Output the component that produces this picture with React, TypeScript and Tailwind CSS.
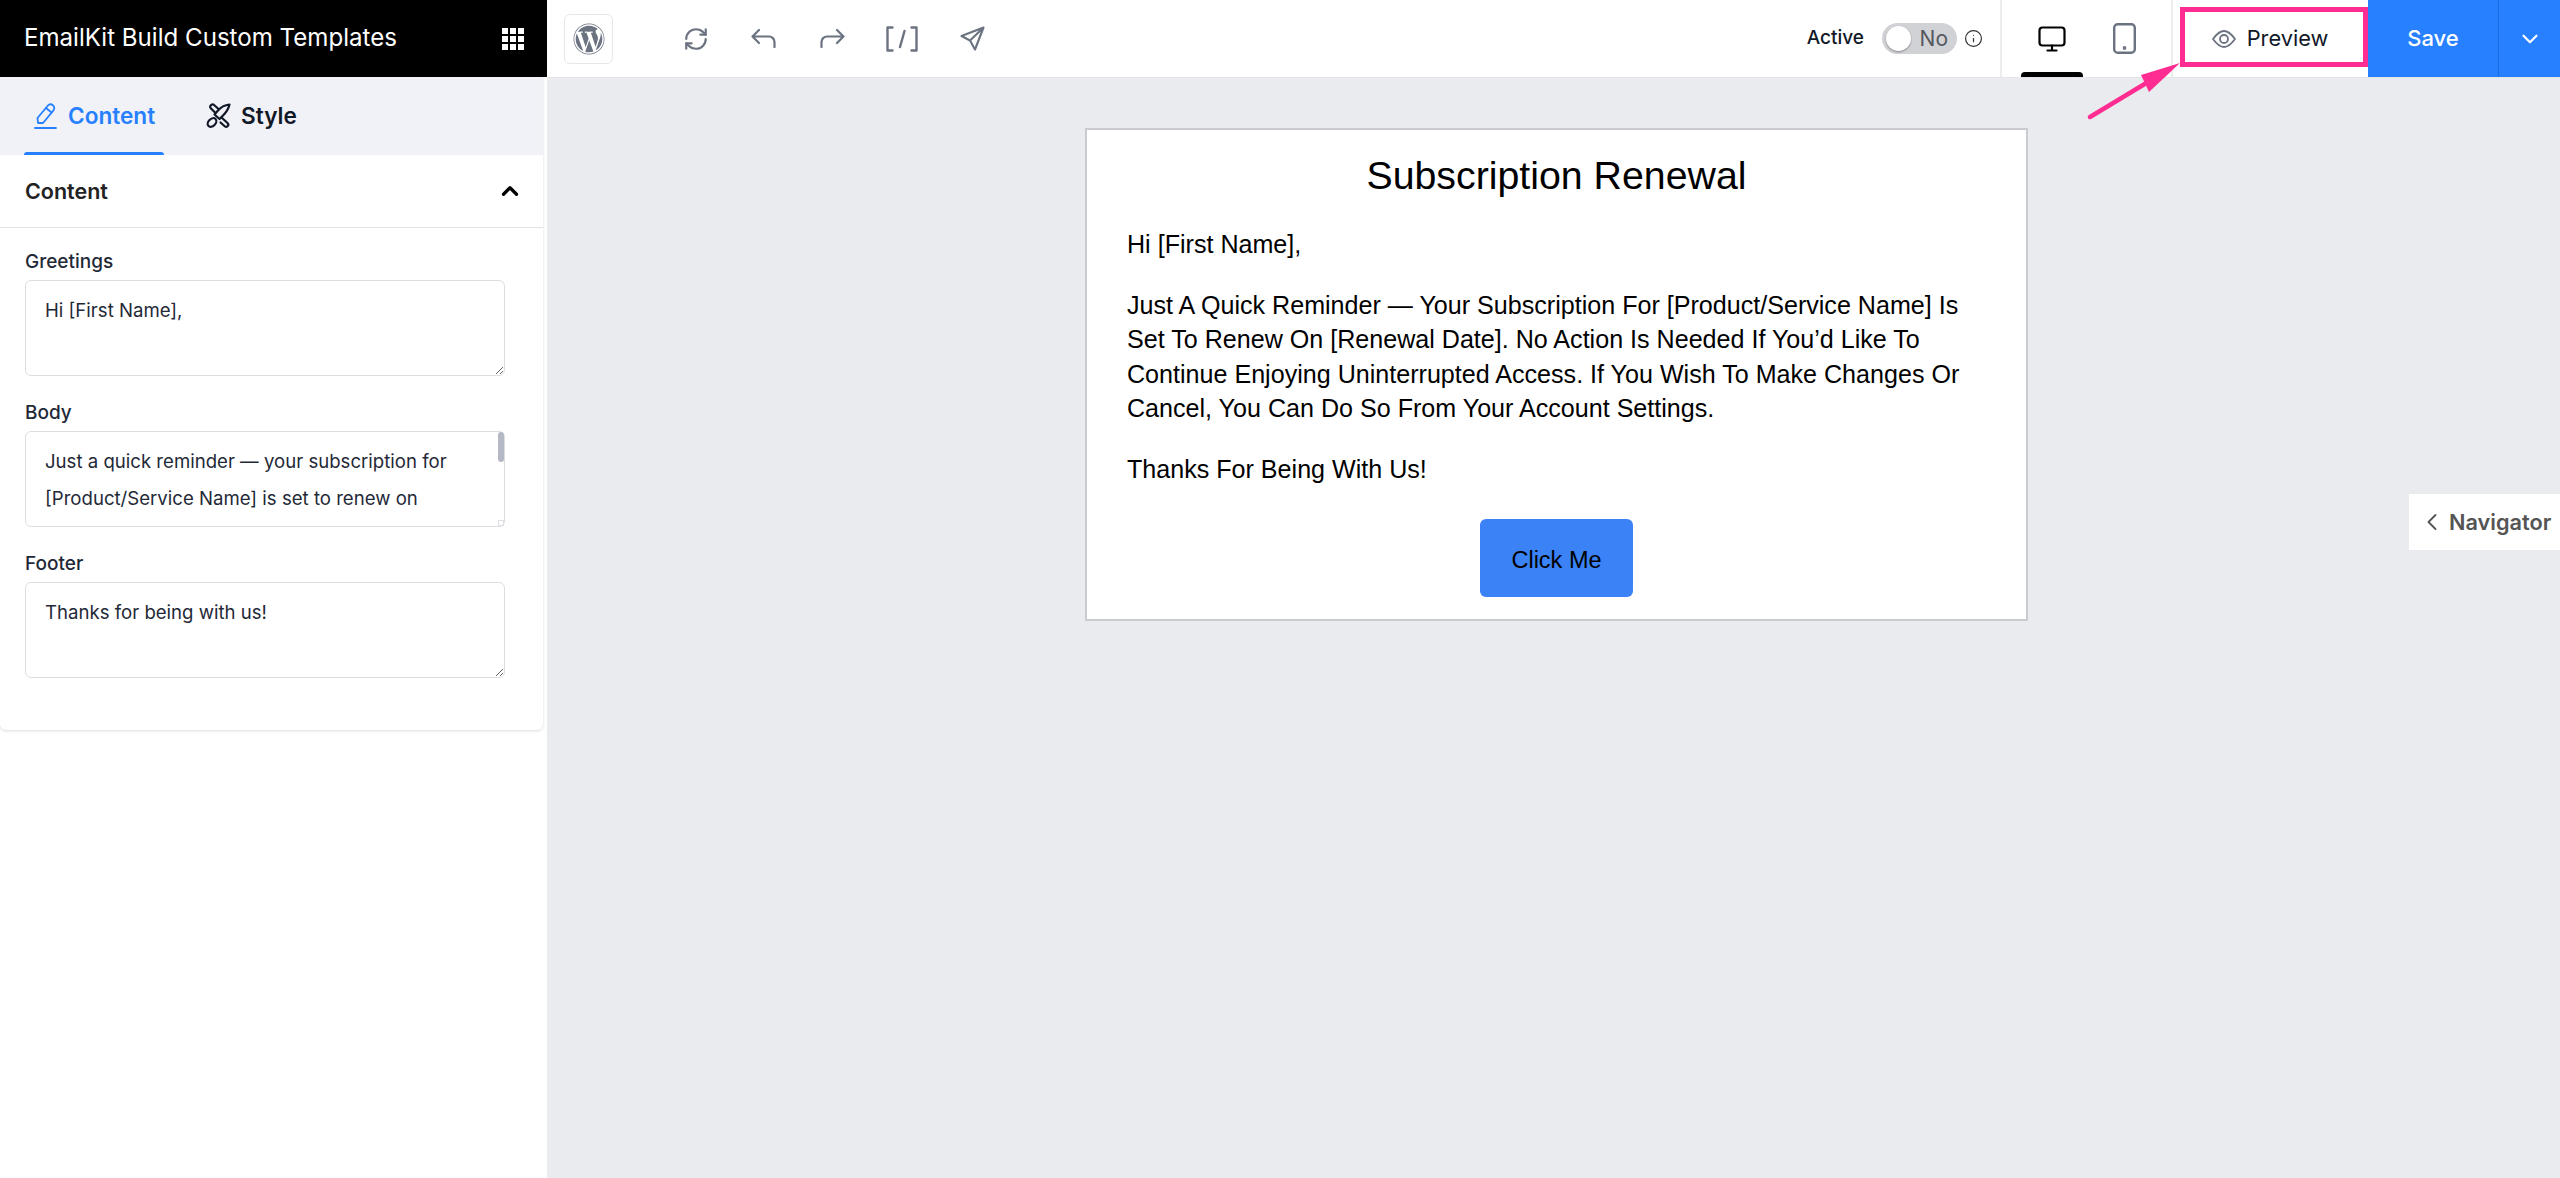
import { ChevronDown, ChevronLeft, ChevronUp, Info, RefreshCw } from 'lucide-react';
import { FaWordpress } from 'react-icons/fa';

// only the part of the body text that shows in the box
const BODY_TEXT = 'Just a quick reminder — your subscription for [Product/Service Name] is set to renew on';

function Field({ label, value, thumb = false }: { label: string; value: string; thumb?: boolean }) {
  return (
    <div className="flex flex-col">
      <label className="mb-[4px] text-[19px] leading-[28px] font-medium text-[#1f2937]">{label}</label>
      <div className="relative h-[96px] w-[480px]">
        <textarea
          readOnly
          value={value}
          className={`block h-full w-full rounded-[6px] border border-[#dcdee3] bg-white py-[11px] pl-[19px] pr-[18px] text-[18.6px] leading-[37px] text-[#1f2937] outline-none ${
            thumb ? 'resize-none overflow-hidden' : 'resize-y'
          }`}
        />
        {thumb && (
          <>
            <div className="absolute right-[1px] top-[1px] h-[30px] w-[6px] rounded-full bg-[#b5b9c5]" />
            <div className="absolute bottom-[1px] right-[1px] h-[6px] w-[6px] border border-[#dcdee3]" />
          </>
        )}
      </div>
    </div>
  );
}

export default function App() {
  return (
    <div className="flex h-[1178px] w-full overflow-hidden bg-[#e9ebef] font-['Inter',sans-serif]">
      {/* sidebar */}
      <aside className="flex w-[547px] shrink-0 flex-col bg-white">
        <div className="flex h-[77px] items-center justify-between bg-black pl-[24px] pr-[23px]">
          <h1 className="text-[24.1px] font-normal text-white">EmailKit Build Custom Templates</h1>
          <div className="grid grid-cols-3 gap-[2px]">
            {Array.from({ length: 9 }).map((_, i) => (
              <span key={i} className="h-[6px] w-[6px] bg-white" />
            ))}
          </div>
        </div>

        <div className="w-[543px] rounded-b-[6px] shadow-[0_1px_3px_rgba(0,0,0,0.15)]">
          {/* tabs */}
          <div className="flex h-[78px] bg-[#f1f2f7] pl-[24px]">
            <div className="relative flex h-full w-[140px] items-center gap-[11px] pl-[10px]">
              <svg width="23" height="26" viewBox="0 0 23 26" fill="none" stroke="#2680ff" strokeWidth="1.800" strokeLinecap="round" strokeLinejoin="round">
                <path d="M4 20l-0.500-5L13.500 3c1.500-1.700 3.800-2 5.400-0.700 1.700 1.300 1.800 3.600 0.400 5.300L9 20z" />
                <path d="M12 5l5.500 4.500" />
                <path d="M1 25h21" />
              </svg>
              <span className="text-[22.6px] font-semibold text-[#2680ff]">Content</span>
              <span className="absolute bottom-0 left-0 h-[3px] w-full rounded-t-[3px] bg-[#2680ff]" />
            </div>
            <div className="ml-[42px] flex h-full items-center gap-[10px]">
              <svg width="25" height="26" viewBox="0 0 25 26" fill="none" stroke="#111827" strokeWidth="2.200" strokeLinecap="round" strokeLinejoin="round">
                <path d="M23.500 1.500c-5 0.500-9 3-12 6.500l-3 3.500 5 4.500 3.500-3.500c3-3 5.500-6.500 6.500-11z" />
                <ellipse cx="6" cy="19.500" rx="5" ry="3.500" transform="rotate(-45 6 19.500)" />
                <path d="M9 9.500L5 5.500C3 3.500 5 1 7.500 1.500L12 5.500" />
                <path d="M15.500 14.500l6 5.500c2 2 0 4.500-2.500 3.500l-4.500-4" />
              </svg>
              <span className="text-[22.6px] font-semibold text-[#111827]">Style</span>
            </div>
          </div>

          {/* section header */}
          <div className="flex h-[73px] items-center justify-between border-b border-[#e2e3e7] pl-[25px] pr-[20px]">
            <span className="text-[21.5px] font-semibold text-[#222222]">Content</span>
            <ChevronUp size={26} strokeWidth={3} className="text-black" />
          </div>

          {/* fields */}
          <div className="flex flex-col gap-[23px] pb-[52px] pl-[25px] pt-[20px]">
            <Field label="Greetings" value="Hi [First Name]," />
            <Field label="Body" value={BODY_TEXT} thumb />
            <Field label="Footer" value="Thanks for being with us!" />
          </div>
        </div>
      </aside>

      {/* right side */}
      <div className="relative flex min-w-0 flex-1 flex-col">
        <header className="flex h-[78px] shrink-0 items-center border-b border-[#e4e5e9] bg-white">
          <div className="ml-[17px] flex h-[50px] w-[49px] items-center justify-center rounded-[6px] border border-[#e5e7eb]">
            <FaWordpress size={32} className="text-[#6b7280]" />
          </div>
          <div className="ml-[70px] flex items-center text-[#6b7280]">
            <RefreshCw size={26} strokeWidth={2} />
            <svg width="25" height="19" viewBox="0 0 25 19" fill="none" stroke="currentColor" strokeWidth="2.200" strokeLinecap="round" strokeLinejoin="round" className="ml-[42px]">
              <path d="M8 1L1.500 7.500 8 14M1.500 7.500H18a5.500 5.500 0 0 1 5.500 5.500v5" />
            </svg>
            <svg width="25" height="19" viewBox="0 0 25 19" fill="none" stroke="currentColor" strokeWidth="2.200" strokeLinecap="round" strokeLinejoin="round" className="ml-[44px]">
              <path d="M17 1l6.500 6.500L17 14M23.500 7.500H7A5.500 5.500 0 0 0 1.500 13v5" />
            </svg>
            <svg width="32" height="26" viewBox="0 0 32 26" fill="none" stroke="currentColor" strokeWidth="2.400" strokeLinecap="round" strokeLinejoin="round" className="ml-[41px]">
              <path d="M6.500 1.500h-5v23h5M25.500 1.500h5v23h-5M18.500 5l-4.500 16" />
            </svg>
            <svg width="25" height="25" viewBox="0 0 25 25" fill="none" stroke="currentColor" strokeWidth="2.100" strokeLinejoin="round" className="ml-[42px]">
              <path d="M23.500 1.500L1.500 10l8.500 4.500 5 9zM23.500 1.500L10 14.500" />
            </svg>
          </div>

          <div className="ml-auto flex h-full items-center">
            <span className="text-[19px] font-medium text-[#111827]">Active</span>
            <div className="relative ml-[18px] flex h-[31px] w-[75px] items-center justify-end rounded-full bg-[#d1d2d6] pr-[9px]">
              <span className="absolute left-[4px] top-[3px] h-[25px] w-[25px] rounded-full bg-white shadow-[0_1px_2px_rgba(0,0,0,0.35)]" />
              <span className="text-[21px] text-[#55585f]">No</span>
            </div>
            <Info size={19} strokeWidth={1.500} className="ml-[7px] text-[#333333]" />
            <div className="ml-[17px] h-full w-[2px] bg-[#eceded]" />
            <div className="relative ml-[19px] flex h-full w-[62px] items-center justify-center">
              <svg width="28" height="26" viewBox="0 0 28 26" fill="none" stroke="#000000" strokeWidth="2.200" strokeLinecap="round" strokeLinejoin="round">
                <rect x="1.500" y="1.500" width="25" height="18" rx="3" />
                <path d="M14 19.500v5M9.500 24.500h9" />
              </svg>
              <span className="absolute bottom-0 left-0 h-[5px] w-[62px] rounded-t-[4px] bg-black" />
            </div>
            <div className="ml-[30px] flex h-full items-center">
              <svg width="23" height="31" viewBox="0 0 23 31" fill="none" stroke="#6b7280" strokeWidth="2.400">
                <rect x="1.200" y="1.200" width="20.600" height="28.600" rx="3.500" />
                <circle cx="11.500" cy="25" r="0.700" fill="#6b7280" />
              </svg>
            </div>
            <div className="ml-[35px] h-full w-[2px] bg-[#eceded]" />
            <div className="relative ml-[7px] flex h-full w-[188px] items-center justify-center pr-[8px]">
              <svg width="24" height="18" viewBox="0 0 24 18" fill="none" stroke="#6b7280" strokeWidth="1.800" strokeLinejoin="round" className="mr-[11px]">
                <path d="M1 9C5 3.500 8.500 1 12 1s7 2.500 11 8c-4 5.500-7.500 8-11 8S5 14.500 1 9z" />
                <circle cx="12" cy="9" r="4" />
              </svg>
              <span className="text-[21.8px] text-[#111827]">Preview</span>
              <span className="absolute left-0 top-[7px] h-[60px] w-full border-[5px] border-[#ff2d92]" />
            </div>
            <button className="flex h-full w-[130px] items-center justify-center bg-[#2680ff] text-[22px] font-medium text-white">Save</button>
            <button className="flex h-full w-[62px] items-center justify-center border-l border-[#1a6de0] bg-[#2680ff] text-white">
              <ChevronDown size={26} strokeWidth={2} />
            </button>
          </div>
        </header>

        <main className="flex flex-1 justify-center pl-[6px] pt-[50px]">
          {/* email card */}
          <div className="h-[493px] w-[943px] border-2 border-[#c9cbd0] bg-white font-['Liberation_Sans',Arial,sans-serif] text-black">
            <h2 className="pt-[22px] text-center text-[39.3px] leading-[46px] font-normal">Subscription Renewal</h2>
            <div className="mt-[29px] flex flex-col gap-[26px] px-[40px] text-[25.1px] leading-[34.500px]">
              <p>Hi [First Name],</p>
              <p>
                Just A Quick Reminder — Your Subscription For [Product/Service Name] Is Set To Renew On [Renewal Date]. No Action Is Needed If You’d Like To Continue
                Enjoying Uninterrupted Access. If You Wish To Make Changes Or Cancel, You Can Do So From Your Account Settings.
              </p>
              <p>Thanks For Being With Us!</p>
            </div>
            <div className="mt-[33px] flex justify-center">
              <button className="h-[78px] w-[153px] rounded-[6px] bg-[#3b82f6] pt-[5px] text-[23.5px] text-black">Click Me</button>
            </div>
          </div>
        </main>

        {/* navigator tab */}
        <div className="absolute right-0 top-[494px] flex h-[56px] w-[151px] items-center bg-white pl-[9px] text-[#555555]">
          <ChevronLeft size={28} strokeWidth={1.600} />
          <span className="ml-[3px] text-[21.7px] font-semibold">Navigator</span>
        </div>

        {/* annotation arrow */}
        <svg className="absolute left-[1533px] top-[55px]" width="110" height="72" viewBox="0 0 110 72" fill="none">
          <path d="M10 62L68 27" stroke="#ff2d92" strokeWidth="4.500" strokeLinecap="round" />
          <path d="M100 8L61 20l8 17z" fill="#ff2d92" />
        </svg>
      </div>
    </div>
  );
}
